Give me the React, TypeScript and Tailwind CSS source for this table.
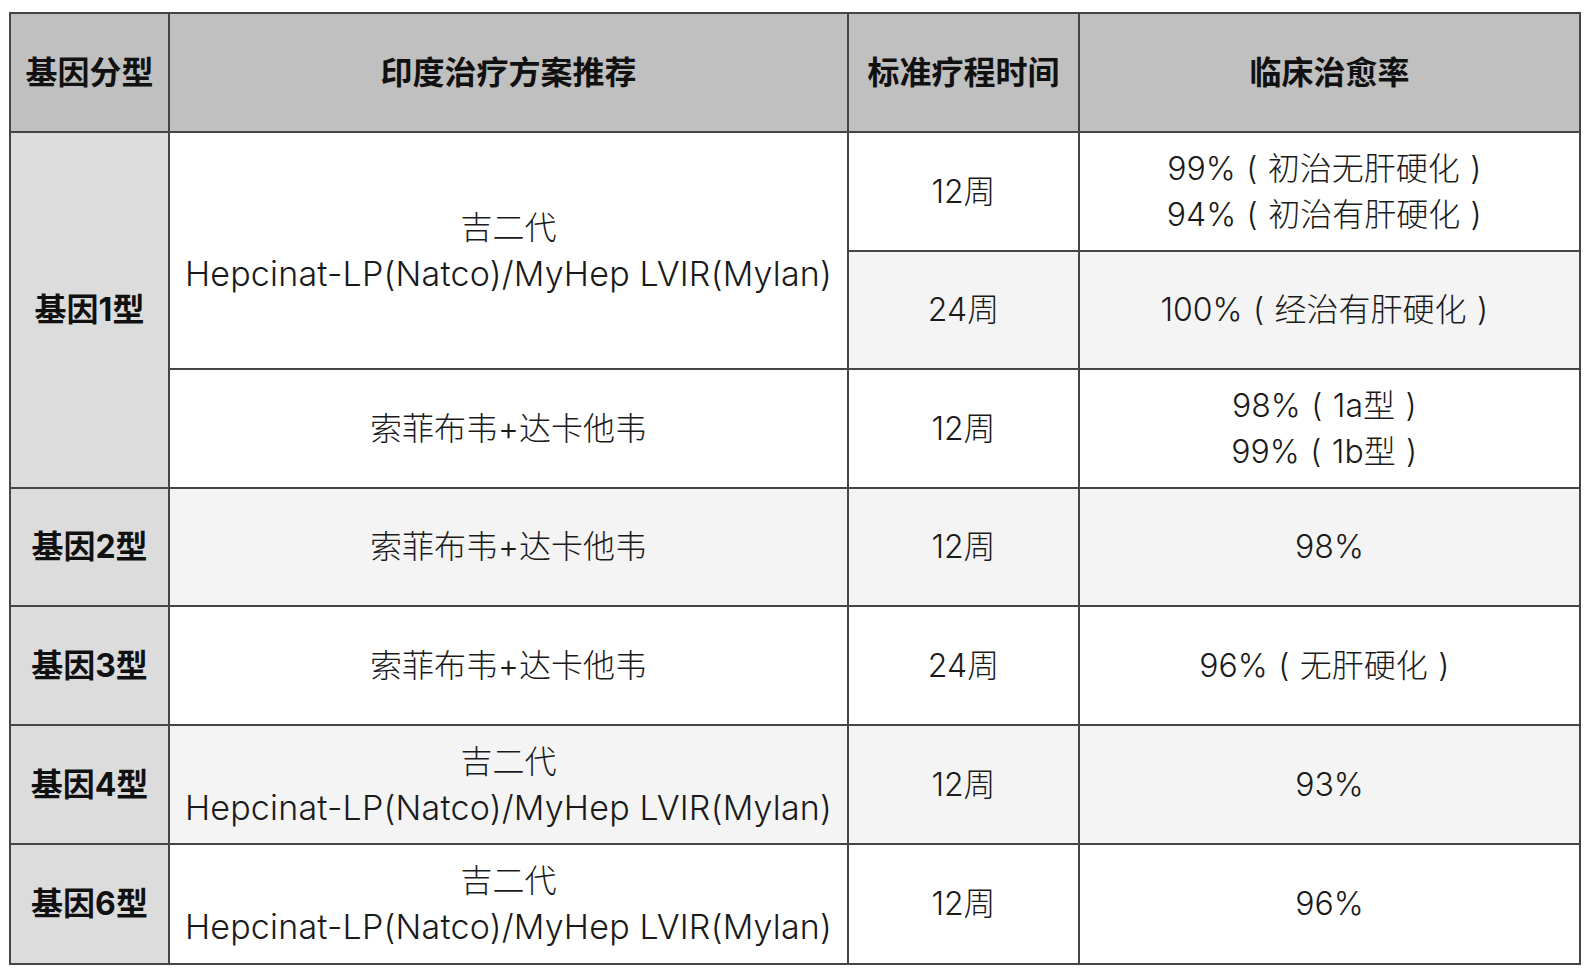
import React from 'react';

const sofDac = '索菲布韦+达卡他韦';

function Head({ children }: { children: React.ReactNode }) {
  return (
    <div className="bg-[#bfc0bf] flex items-center justify-center text-[32px] font-bold text-[#111]">
      {children}
    </div>
  );
}

function Gene({ children, span = '' }: { children: React.ReactNode; span?: string }) {
  return (
    <div className={`bg-[#dcdcdc] flex items-center justify-center text-[32px] font-bold text-[#111] ${span}`}>
      {children}
    </div>
  );
}

// full-width paren, glyph centred in its box like the source font
function Paren({ c }: { c: string }) {
  return <span className="inline-block w-[32px] text-center">{c}</span>;
}

function Rate({ pct, note }: { pct: string; note: string }) {
  return (
    <>
      {pct}
      <Paren c="(" />
      {note}
      <Paren c=")" />
    </>
  );
}

const hep = (
  <>
    <div>吉二代</div>
    <div className="text-[34px] tracking-[0.2px]">Hepcinat-LP(Natco)/MyHep LVIR(Mylan)</div>
  </>
);

function Cell({ children, gray = false, span = '' }: { children: React.ReactNode; gray?: boolean; span?: string }) {
  return (
    <div
      className={`flex flex-col items-center justify-center text-center whitespace-nowrap text-[32px] leading-[46px] font-light text-[#1a1a1a] ${
        gray ? 'bg-[#f4f4f4]' : 'bg-white'
      } ${span}`}
    >
      {children}
    </div>
  );
}

export default function App() {
  return (
    <div
      className="min-h-screen bg-white pl-[9px] pt-[12px]"
      style={{ fontFamily: 'Inter, "Noto Sans CJK SC", sans-serif' }}
    >
      <div className="inline-grid bg-[#454545] p-[2px] gap-[2px] grid-cols-[157px_677px_229px_499px] grid-rows-[117px_117px_116px_117px_116px_117px_117px_118px]">
        <Head>基因分型</Head>
        <Head>印度治疗方案推荐</Head>
        <Head>标准疗程时间</Head>
        <Head>临床治愈率</Head>

        {/* genotype 1 */}
        <Gene span="row-span-3">基因1型</Gene>
        <Cell span="row-span-2">{hep}</Cell>
        <Cell>12周</Cell>
        <Cell>
          <div><Rate pct="99%" note="初治无肝硬化" /></div>
          <div><Rate pct="94%" note="初治有肝硬化" /></div>
        </Cell>
        <Cell gray>24周</Cell>
        <Cell gray>
          <div><Rate pct="100%" note="经治有肝硬化" /></div>
        </Cell>
        <Cell>{sofDac}</Cell>
        <Cell>12周</Cell>
        <Cell>
          <div><Rate pct="98%" note="1a型" /></div>
          <div><Rate pct="99%" note="1b型" /></div>
        </Cell>

        <Gene>基因2型</Gene>
        <Cell gray>{sofDac}</Cell>
        <Cell gray>12周</Cell>
        <Cell gray>98%</Cell>

        <Gene>基因3型</Gene>
        <Cell>{sofDac}</Cell>
        <Cell>24周</Cell>
        <Cell>
          <div><Rate pct="96%" note="无肝硬化" /></div>
        </Cell>

        <Gene>基因4型</Gene>
        <Cell gray>{hep}</Cell>
        <Cell gray>12周</Cell>
        <Cell gray>93%</Cell>

        <Gene>基因6型</Gene>
        <Cell>{hep}</Cell>
        <Cell>12周</Cell>
        <Cell>96%</Cell>
      </div>
    </div>
  );
}
